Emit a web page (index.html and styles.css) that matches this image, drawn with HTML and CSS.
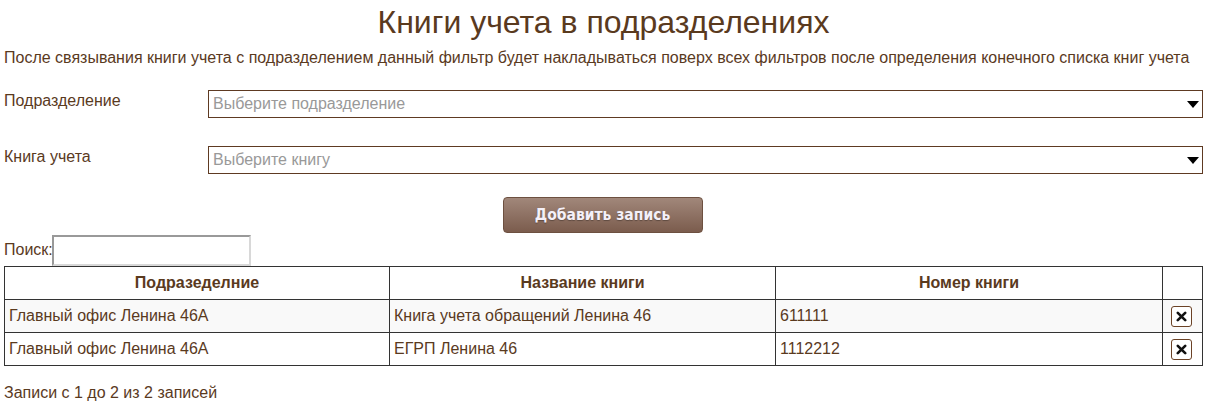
FILE: index.html
```html
<!DOCTYPE html>
<html lang="ru">
<head>
<meta charset="utf-8">
<title>Книги учета в подразделениях</title>
<link rel="stylesheet" href="styles.css">
</head>
<body>
<div class="page">
  <h1 class="title">Книги учета в подразделениях</h1>
  <p class="desc">После связывания книги учета с подразделением данный фильтр будет накладываться поверх всех фильтров после определения конечного списка книг учета</p>
  <div class="field">
    <label class="field-label">Подразделение</label>
    <div class="select"><span class="placeholder">Выберите подразделение</span><span class="caret"></span></div>
  </div>
  <div class="field">
    <label class="field-label">Книга учета</label>
    <div class="select"><span class="placeholder">Выберите книгу</span><span class="caret"></span></div>
  </div>
  <div class="actions">
    <button class="btn">Добавить запись</button>
  </div>
  <div class="search">
    <span>Поиск:</span><input class="search-input" type="text">
  </div>
  <table class="grid">
    <thead>
      <tr>
        <th class="c1">Подразеделние</th>
        <th class="c2">Название книги</th>
        <th class="c3">Номер книги</th>
        <th class="c4"></th>
      </tr>
    </thead>
    <tbody>
      <tr class="odd">
        <td>Главный офис Ленина 46А</td>
        <td>Книга учета обращений Ленина 46</td>
        <td>611111</td>
        <td class="act"><span class="del"><svg width="11" height="11" viewBox="0 0 11 11"><path d="M1.8 1.8 L9.2 9.2 M9.2 1.8 L1.8 9.2" stroke="#111" stroke-width="2.6" stroke-linecap="round"/></svg></span></td>
      </tr>
      <tr>
        <td>Главный офис Ленина 46А</td>
        <td>ЕГРП Ленина 46</td>
        <td>1112212</td>
        <td class="act"><span class="del"><svg width="11" height="11" viewBox="0 0 11 11"><path d="M1.8 1.8 L9.2 9.2 M9.2 1.8 L1.8 9.2" stroke="#111" stroke-width="2.6" stroke-linecap="round"/></svg></span></td>
      </tr>
    </tbody>
  </table>
  <div class="info">Записи с 1 до 2 из 2 записей</div>
</div>
</body>
</html>
```

FILE: styles.css
```css
* { box-sizing: border-box; }
html, body { margin: 0; padding: 0; background: #fff; }
body {
  font-family: "Liberation Sans", Arial, sans-serif;
  color: #5a3a1e;
  font-size: 16px;
}
.page { padding: 0 13px 0 4px; }
.title {
  margin: 0;
  padding-top: 4px;
  height: 46px;
  text-align: center;
  font-weight: normal;
  font-size: 32px;
  line-height: 36px;
  color: #5a3a1e;
}
.desc {
  margin: 0;
  height: 41px;
  line-height: 23px;
  font-size: 16px;
  white-space: nowrap;
}
.field {
  display: flex;
  align-items: flex-start;
  height: 56px;
  padding-top: 3px;
}
.field-label {
  width: 204px;
  flex: none;
  line-height: 22px;
  font-size: 16px;
}
.select {
  flex: 1;
  height: 28px;
  border: 1px solid #5e3a22;
  display: flex;
  align-items: center;
  justify-content: space-between;
  padding: 0 3px 0 4px;
}
.placeholder { color: #999; font-size: 16px; }
.caret {
  width: 0; height: 0;
  border-left: 6px solid transparent;
  border-right: 6px solid transparent;
  border-top: 7px solid #000;
}
.actions {
  display: flex;
  justify-content: center;
  margin-top: -2px;
}
.btn {
  width: 200px;
  height: 36px;
  border: 1px solid #6d5040;
  border-radius: 4px;
  background: linear-gradient(#a1877a, #7b5c4d);
  color: #f4f0f8;
  font-family: "DejaVu Sans Condensed", "Liberation Sans", sans-serif;
  font-weight: bold;
  font-size: 15.5px;
  text-shadow: 0 1px 1px rgba(0,0,0,0.3);
  padding: 0;
  margin-left: -2px;
}
.search {
  display: flex;
  align-items: center;
  margin-top: 1px;
  height: 32px;
}
.search span { font-size: 16px; }
.search-input {
  width: 199px;
  height: 31px;
  border: 2px solid #d8d8d8;
  border-top-color: #999;
  border-left-color: #999;
  margin: 0 0 0 -1px;
  padding: 0;
}
.grid {
  width: 100%;
  border-collapse: collapse;
  font-size: 16px;
}
.grid th, .grid td {
  border: 1px solid #333;
  height: 33px;
  padding: 0 4px;
}
.grid th {
  font-weight: bold;
  text-align: center;
}
.grid td { text-align: left; }
.c1 { width: 385px; }
.c2 { width: 386px; }
.c3 { width: 387px; }
.odd td { background: #f9f9f9; }
.grid td.act { text-align: center; padding: 0 2px 0 0; }
.del {
  display: inline-flex;
  align-items: center;
  justify-content: center;
  width: 21px;
  height: 21px;
  border: 1px solid #6b4226;
  border-radius: 3px;
  vertical-align: middle;
  background: #fff;
}
.info {
  margin-top: 18px;
  font-size: 16px;
}
```
